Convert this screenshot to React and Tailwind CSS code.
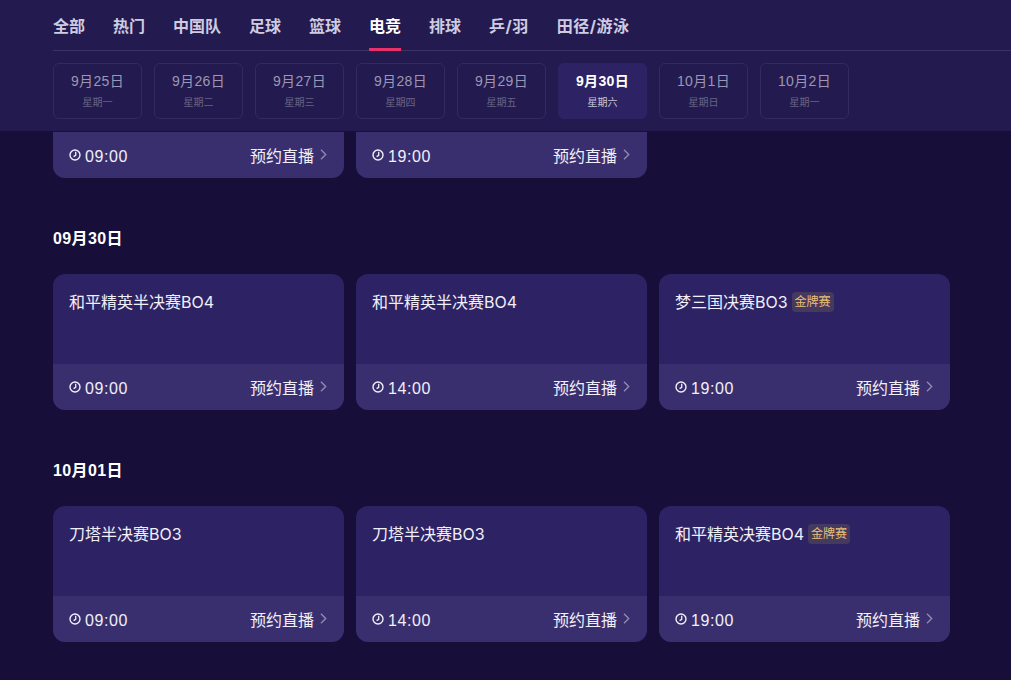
const tabs = ['全部', '热门', '中国队', '足球', '篮球', '电竞', '排球', '乒/羽', '田径/游泳']
const dates = [
  ['9月25日', '星期一'],
  ['9月26日', '星期二'],
  ['9月27日', '星期三'],
  ['9月28日', '星期四'],
  ['9月29日', '星期五'],
  ['9月30日', '星期六'],
  ['10月1日', '星期日'],
  ['10月2日', '星期一'],
]
const days = [
  {
    title: '09月30日',
    matches: [
      { name: '和平精英半决赛BO4', time: '09:00' },
      { name: '和平精英半决赛BO4', time: '14:00' },
      { name: '梦三国决赛BO3', time: '19:00', gold: true },
    ],
  },
  {
    title: '10月01日',
    matches: [
      { name: '刀塔半决赛BO3', time: '09:00' },
      { name: '刀塔半决赛BO3', time: '14:00' },
      { name: '和平精英决赛BO4', time: '19:00', gold: true },
    ],
  },
]

function ClockIcon() {
  return (
    <svg width="12" height="12" viewBox="0 0 12 12" fill="none" stroke="currentColor" className="mb-[3px] shrink-0">
      <circle cx="6" cy="6" r="5" strokeWidth="1.4" />
      <path d="M6.7 2.8V6.3L4.6 7.6" strokeWidth="1.3" />
    </svg>
  )
}

function Chevron() {
  return (
    <svg width="7" height="11" viewBox="0 0 7 11" fill="none" stroke="#8e89ad" strokeWidth="1.4" className="mb-1 shrink-0">
      <path d="M1 0.8L5.7 5.5L1 10.2" />
    </svg>
  )
}

function CardFooter({ time }) {
  return (
    <div className="flex h-[46px] items-center justify-between rounded-b-xl bg-[#3a2f6e] pt-[2px] pl-4 pr-[17px] text-[#f1eff8]">
      <span className="flex items-center gap-1 text-base">
        <ClockIcon />
        <span className='pt-px tracking-[0.6px] [font-family:"Liberation_Sans",sans-serif]'>{time}</span>
      </span>
      <span className="flex items-center gap-[6px] text-base">
        预约直播
        <Chevron />
      </span>
    </div>
  )
}

function MatchCard({ match }) {
  return (
    <div className="overflow-hidden rounded-xl bg-[#2d2364]">
      <div className="flex h-[90px] items-start px-4 pt-4">
        <span className="text-base leading-6 text-[#f1eff8]">{match.name}</span>
        {match.gold && (
          <span className="ml-1 mt-[2px] rounded-sm bg-[#443a5e] px-[3px] text-xs leading-5 text-[#eabf78]">金牌赛</span>
        )}
      </div>
      <CardFooter time={match.time} />
    </div>
  )
}

export default function App() {
  return (
    <div
      className="h-[680px] overflow-hidden bg-[#170f3a]"
      style={{ fontFamily: 'Inter, "Noto Sans CJK SC", sans-serif' }}
    >
      <header className="h-[131px] bg-[#231b50] pl-[53px]">
        <nav className="flex h-[51px] gap-7 border-b border-[#3b3365]">
          {tabs.map((tab) => (
            <span
              key={tab}
              className={
                tab === '电竞'
                  ? 'h-[51px] border-b-[3px] border-[#e8306a] pt-[14px] text-base leading-6 font-bold text-white'
                  : tab.includes('/')
                    ? 'pt-[14px] text-base leading-6 font-bold tracking-[0.5px] text-[#cfcbe0]'
                    : 'pt-[14px] text-base leading-6 font-bold text-[#cfcbe0]'
              }
            >
              {tab}
            </span>
          ))}
        </nav>
        <div className="mt-3 flex gap-3">
          {dates.map(([date, week]) => {
            const active = date === '9月30日'
            return (
              <div
                key={date}
                className={
                  active
                    ? 'flex h-14 w-[89px] flex-col items-center rounded-md border border-[#2d2364] bg-[#2d2364] pt-[7px]'
                    : 'flex h-14 w-[89px] flex-col items-center rounded-md border border-[#332b5f] pt-[7px]'
                }
              >
                <span
                  className={
                    active
                      ? 'text-sm leading-5 font-bold tracking-[0.35px] text-white [font-family:"Liberation_Sans","Noto_Sans_CJK_SC",sans-serif]'
                      : 'text-sm leading-5 tracking-[0.35px] text-[#9c97b3] [font-family:"Liberation_Sans","Noto_Sans_CJK_SC",sans-serif]'
                  }
                >
                  {date}
                </span>
                <span className={active ? 'mt-[3px] text-[10px] leading-4 text-[#c9c6d8]' : 'mt-[3px] text-[10px] leading-4 text-[#696384]'}>
                  {week}
                </span>
              </div>
            )
          })}
        </div>
      </header>

      <main className="pl-[53px]">
        <div className="grid w-[897px] grid-cols-3 gap-3">
          <div className="pt-px">
            <CardFooter time="09:00" />
          </div>
          <div className="pt-px">
            <CardFooter time="19:00" />
          </div>
        </div>
        {days.map((day) => (
          <section key={day.title} className="mt-12">
            <h2 className='mb-[23px] pt-px text-base leading-6 font-bold tracking-[0.4px] text-white [font-family:"Liberation_Sans","Noto_Sans_CJK_SC",sans-serif]'>
              {day.title}
            </h2>
            <div className="grid w-[897px] grid-cols-3 gap-3">
              {day.matches.map((match) => (
                <MatchCard key={match.name + match.time} match={match} />
              ))}
            </div>
          </section>
        ))}
      </main>
    </div>
  )
}
